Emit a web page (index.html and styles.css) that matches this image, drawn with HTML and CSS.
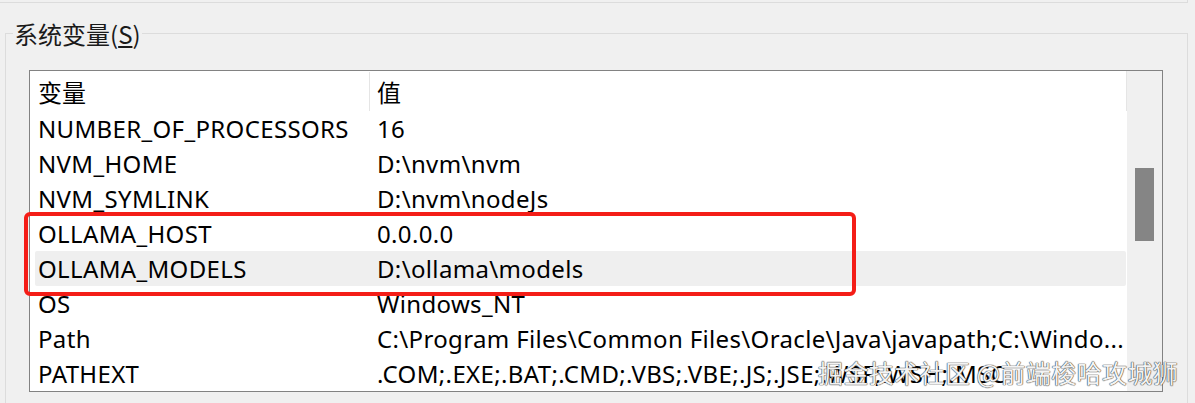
FILE: index.html
```html
<!DOCTYPE html>
<html lang="zh-CN">
<head>
<meta charset="utf-8">
<title>系统变量</title>
<link rel="stylesheet" href="styles.css">
</head>
<body>
<div class="top-box"></div>
<fieldset class="group">
  <legend class="group-title">系统变量(<span class="accel">S</span>)</legend>
  <div class="listbox">
    <div class="list">
      <div class="header">
        <div class="hcell">变量</div>
        <div class="hcell hcell-val">值</div>
      </div>
      <div class="row"><span class="name">NUMBER_OF_PROCESSORS</span><span class="value">16</span></div>
      <div class="row"><span class="name">NVM_HOME</span><span class="value">D:\nvm\nvm</span></div>
      <div class="row"><span class="name">NVM_SYMLINK</span><span class="value">D:\nvm\nodeJs</span></div>
      <div class="row"><span class="name">OLLAMA_HOST</span><span class="value">0.0.0.0</span></div>
      <div class="row row-hover"><span class="name">OLLAMA_MODELS</span><span class="value">D:\ollama\models</span></div>
      <div class="row"><span class="name">OS</span><span class="value">Windows_NT</span></div>
      <div class="row"><span class="name">Path</span><span class="value">C:\Program Files\Common Files\Oracle\Java\javapath;C:\Windo...</span></div>
      <div class="row"><span class="name">PATHEXT</span><span class="value">.COM;.EXE;.BAT;.CMD;.VBS;.VBE;.JS;.JSE;.WSF;.WSH;.MSC</span></div>
    </div>
    <div class="scrollbar"><div class="thumb"></div></div>
    <div class="annotation"></div>
  </div>
</fieldset>
<div class="watermark">掘金技术社区 @前端梭哈攻城狮</div>
</body>
</html>
```
FILE: styles.css
```css
html, body {
  margin: 0;
  padding: 0;
  background: #f0f0f0;
  width: 1195px;
  height: 403px;
  overflow: hidden;
}

body {
  font-family: "Noto Sans", "Noto Sans CJK SC", sans-serif;
  font-size: 24px;
  letter-spacing: 0.35px;
  color: #000;
  position: relative;
}

.top-box {
  width: 1187px;
  height: 2px;
  border-bottom: 1px solid #dcdcdc;
  border-right: 1px solid #dcdcdc;
}

.group {
  margin: 15px 0 0 5px;
  padding: 22px 0 0 0;
  width: 1183px;
  height: 400px;
  border: 1px solid #dcdcdc;
  box-sizing: border-box;
  min-width: 0;
}

.group-title {
  margin-left: 7px;
  padding: 2px 1px 0 1px;
  line-height: 28px;
  height: 30px;
  box-sizing: border-box;
  font-family: "Noto Sans CJK SC", "Noto Sans", sans-serif;
  letter-spacing: 0;
  color: #1a1a1a;
}

.accel {
  text-decoration: underline;
  text-underline-offset: 2px;
}

.listbox {
  position: relative;
  margin-left: 23px;
  width: 1134px;
  height: 322px;
  box-sizing: border-box;
  border: 1px solid #828282;
  background: #fff;
  display: grid;
  grid-template-columns: 1fr 35px;
}

.list {
  overflow: hidden;
}

.header {
  height: 40px;
  display: grid;
  grid-template-columns: 339px 1fr;
  border-right: 1px solid #e5e5e5;
  padding-top: 1px;
  box-sizing: border-box;
}

.hcell {
  font-family: "Noto Sans CJK SC", sans-serif;
  letter-spacing: 0;
  padding-left: 8px;
  display: flex;
  align-items: center;
}

.hcell-val {
  border-left: 1px solid #e5e5e5;
  padding-left: 7px;
}

.row {
  height: 35px;
  margin-left: 5px;
  margin-right: 1px;
  display: grid;
  grid-template-columns: 334px 1fr;
  align-items: center;
  white-space: nowrap;
}

.row-hover {
  background: #efefef;
  border-radius: 2px;
}

.name {
  padding-left: 3px;
  overflow: hidden;
}

.value {
  padding-left: 8px;
  overflow: hidden;
}

.scrollbar {
  background: #f0f0f0;
  padding: 97px 8px 0 8px;
}

.thumb {
  width: 19px;
  height: 73px;
  background: #858585;
}

.annotation {
  position: absolute;
  left: -6px;
  top: 141px;
  width: 832px;
  height: 84px;
  box-sizing: border-box;
  border: 4px solid #f41d17;
  border-radius: 6px;
}

.watermark {
  position: absolute;
  left: 818px;
  top: 356px;
  font-family: "Noto Sans CJK SC", sans-serif;
  font-size: 25px;
  line-height: 32px;
  letter-spacing: 0.4px;
  color: rgba(255, 255, 255, 0.95);
  text-shadow: 0 0 1px #444, 0 0 1px #444, 0 0 1px #666;
  white-space: nowrap;
}
```
